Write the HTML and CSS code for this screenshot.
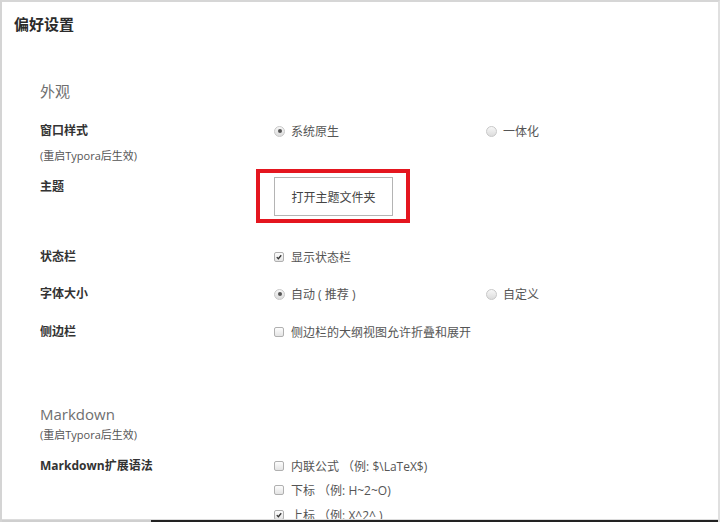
FILE: index.html
```html
<!DOCTYPE html>
<html lang="zh-CN">
<head>
<meta charset="utf-8">
<title>偏好设置</title>
<link rel="stylesheet" href="styles.css">
</head>
<body>
<div class="window">
  <div class="content">
    <div class="title">偏好设置</div>
    <div class="pane">
      <div class="section-h sh-look">外观</div>

      <div class="row r-window">
        <div class="label">窗口样式</div>
        <div class="opts-inline">
          <div class="opt col1"><span class="radio checked"></span><span class="otext">系统原生</span></div>
          <div class="opt"><span class="radio"></span><span class="otext">一体化</span></div>
        </div>
      </div>
      <div class="note n-window">(重启Typora后生效)</div>

      <div class="row r-theme">
        <div class="label label-theme">主题</div>
        <div class="btn-wrap">
          <button class="btn">打开主题文件夹</button>
          <span class="highlight"></span>
        </div>
      </div>

      <div class="row r-status">
        <div class="label">状态栏</div>
        <div class="opt"><span class="check checked"><svg viewBox="0 0 10 10" width="10" height="10"><path d="M2.2 5.2 L4.2 7.2 L7.8 2.8" fill="none" stroke="#333" stroke-width="1.6"/></svg></span><span class="otext">显示状态栏</span></div>
      </div>

      <div class="row r-font">
        <div class="label">字体大小</div>
        <div class="opts-inline">
          <div class="opt col1"><span class="radio checked"></span><span class="otext">自动 ( 推荐 )</span></div>
          <div class="opt"><span class="radio"></span><span class="otext">自定义</span></div>
        </div>
      </div>

      <div class="row r-side">
        <div class="label">侧边栏</div>
        <div class="opt"><span class="check"></span><span class="otext">侧边栏的大纲视图允许折叠和展开</span></div>
      </div>

      <div class="section-h sh-md">Markdown</div>
      <div class="note n-md">(重启Typora后生效)</div>

      <div class="row r-ext">
        <div class="label">Markdown扩展语法</div>
        <div class="opts-list">
          <div class="opt"><span class="check"></span><span class="otext">内联公式 （例: $\LaTeX$)</span></div>
          <div class="opt"><span class="check"></span><span class="otext">下标 （例: H~2~O)</span></div>
          <div class="opt"><span class="check checked"><svg viewBox="0 0 10 10" width="10" height="10"><path d="M2.2 5.2 L4.2 7.2 L7.8 2.8" fill="none" stroke="#333" stroke-width="1.6"/></svg></span><span class="otext">上标 （例: X^2^ )</span></div>
        </div>
      </div>
    </div>
  </div>
  <div class="bottom-bar">
    <div class="bb-left"></div>
    <div class="bb-right"></div>
  </div>
</div>
</body>
</html>
```

FILE: styles.css
```css
* { box-sizing: border-box; }

html, body {
  margin: 0;
  padding: 0;
  background: #fff;
}

body {
  font-family: "Open Sans", "Noto Sans CJK SC", sans-serif;
  color: #333;
}

.window {
  width: 720px;
  height: 522px;
  display: flex;
  flex-direction: column;
  overflow: hidden;
  border-top: 2px solid #d6d6d6;
  border-left: 2px solid #d4d4d4;
  border-right: 2px solid #e0e0e0;
  background: #fff;
}

.content {
  flex: 1;
  overflow: hidden;
}

.title {
  margin-top: 12px;
  padding-left: 12px;
  font-size: 15px;
  line-height: 20px;
  font-weight: 700;
  color: #2b2b2b;
}

.pane {
  padding-left: 38px;
}

.section-h {
  font-size: 15px;
  line-height: 20px;
  color: #6f6f6f;
  font-weight: 400;
}

.sh-look { margin-top: 47px; }
.sh-md { margin-top: 62.5px; }

.row {
  display: flex;
  align-items: flex-start;
}

.label {
  width: 234px;
  flex: none;
  font-size: 12px;
  line-height: 20px;
  font-weight: 700;
  color: #333;
}

.label-theme { margin-top: 2px; }

.r-window { margin-top: 20px; }
.n-window { margin-top: 5px; }
.r-theme { margin-top: 9px; }
.r-status { margin-top: 30.5px; }
.r-font { margin-top: 17.5px; }
.r-side { margin-top: 17.5px; }
.n-md { margin-top: 1px; }
.r-ext { margin-top: 10.5px; }

.note {
  font-size: 11px;
  line-height: 20px;
  color: #555;
}

.opts-inline {
  display: flex;
}

.opts-list {
  display: flex;
  flex-direction: column;
  gap: 4.5px;
}

.opt {
  display: flex;
  align-items: center;
  height: 20px;
  font-size: 12px;
  color: #555;
}

.opt.col1 { width: 212px; }

.otext { white-space: pre; }

.radio {
  width: 11px;
  height: 11px;
  border-radius: 50%;
  border: 1px solid #c8c8c8;
  background: linear-gradient(#f7f7f7, #dcdcdc);
  margin-right: 6px;
  flex: none;
  display: flex;
  align-items: center;
  justify-content: center;
}

.radio.checked::after {
  content: "";
  width: 4px;
  height: 4px;
  border-radius: 50%;
  background: #555;
}

.check {
  width: 10px;
  height: 10px;
  border: 1px solid #b0b0b0;
  border-radius: 2px;
  background: linear-gradient(#fdfdfd, #e4e4e4);
  margin-right: 7px;
  flex: none;
  display: flex;
  align-items: center;
  justify-content: center;
}

.check svg { display: block; width: 8px; height: 8px; }

.btn-wrap {
  position: relative;
  margin-top: 2px;
}

.btn {
  display: block;
  width: 119px;
  height: 39px;
  border: 1px solid #b4b4b4;
  background: #fff;
  font-family: "Open Sans", "Noto Sans CJK SC", sans-serif;
  font-size: 12px;
  color: #444;
  padding: 0;
}

.highlight {
  position: absolute;
  left: -18px;
  top: -8px;
  right: -17px;
  bottom: -7px;
  border: 4px solid #e4161f;
  pointer-events: none;
}

.bottom-bar {
  flex: none;
  height: 3px;
  display: flex;
  border-top: 1px solid #dcdcdc;
  margin-left: -2px;
  margin-right: -2px;
}

.bb-left { width: 151px; background: #cfcfcf; }
.bb-right { flex: 1; background: #222; }
```
